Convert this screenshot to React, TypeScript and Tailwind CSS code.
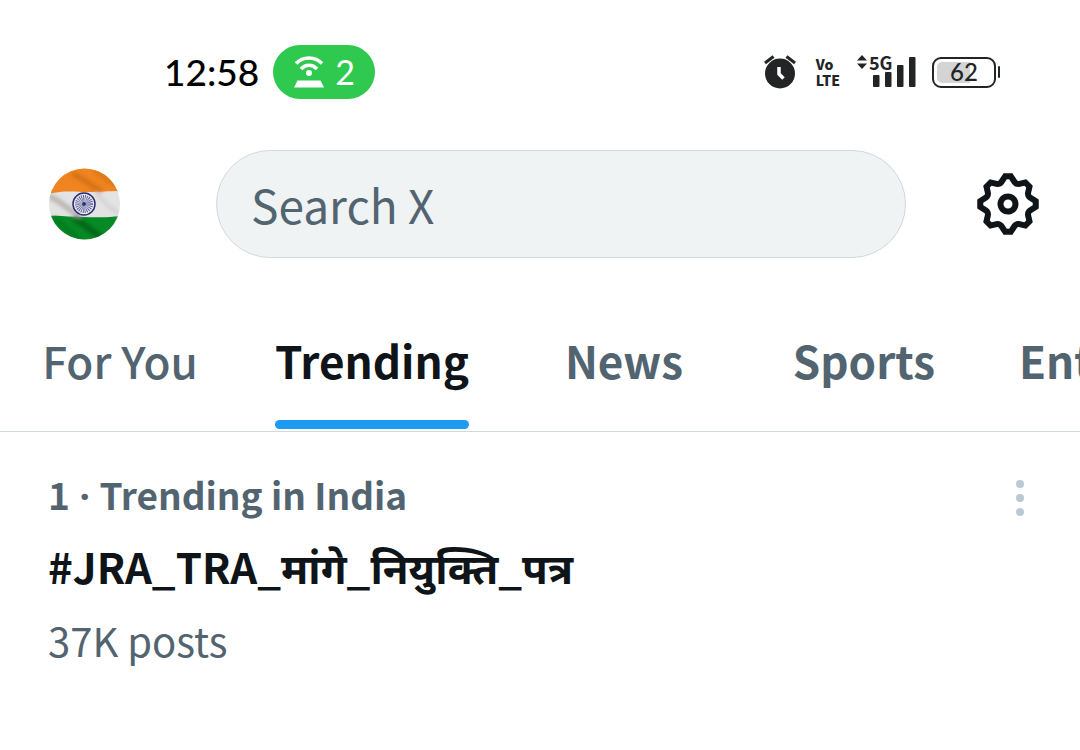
import { useState } from 'react';

const tabs = ['For You', 'Trending', 'News', 'Sports', 'Entertainment'];

const AlarmIcon = () => (
  <svg viewBox="0 0 32 34" className="h-[34px] w-8" fill="#222426" aria-hidden="true">
    <circle cx="16" cy="18.5" r="15" />
    <path d="M1 8l8.500-6.500M31 8l-8.500-6.500" stroke="#222426" strokeWidth="3" fill="none" />
    <path d="M15 12v7l4.5 4.5" stroke="#fff" strokeWidth="3.500" fill="none" />
  </svg>
);

const HotspotIcon = () => (
  <svg viewBox="0 0 32 32" className="size-8" fill="none" stroke="#fff" strokeWidth="3.500" aria-hidden="true">
    <path d="M3 7.5C10 0 22 0 29 7.5" />
    <path d="M8 13c4.500-5 11.500-5 16 0" />
    <circle cx="16" cy="17" r="3" fill="#fff" stroke="none" />
    <path d="M4.500 24.500h23l3.500 7H1z" fill="#fff" stroke="none" />
  </svg>
);

const SignalIcon = () => (
  <svg viewBox="0 0 44 32" className="h-8 w-11" fill="#222426" aria-hidden="true">
    <rect x="1" y="19" width="6.500" height="12" rx="1" />
    <rect x="13" y="16" width="6.500" height="15" rx="1" />
    <rect x="25" y="9" width="6.500" height="22" rx="1" />
    <rect x="37" y="1" width="6.500" height="30" rx="1" />
  </svg>
);

const GearIcon = () => (
  <svg viewBox="0 0 24 24" className="size-[72px]" fill="currentColor" aria-hidden="true">
    <path d="M10.54 1.75h2.92l1.57 2.36c.11.17.32.25.53.21l2.53-.59 2.17 2.17-.58 2.54c-.05.2.04.41.21.53l2.36 1.57v2.92l-2.36 1.57c-.17.12-.26.33-.21.53l.58 2.54-2.17 2.17-2.53-.59c-.21-.04-.42.04-.53.21l-1.57 2.36h-2.92l-1.58-2.36c-.11-.17-.32-.25-.52-.21l-2.54.59-2.17-2.17.58-2.54c.05-.2-.03-.41-.21-.53l-2.35-1.57v-2.92L4.1 8.97c.18-.12.26-.33.21-.53L3.73 5.9 5.9 3.73l2.54.59c.2.04.41-.04.52-.21l1.58-2.36zm1.07 2l-.98 1.47C10.05 6.08 9 6.5 7.99 6.27l-1.46-.34-.6.6.33 1.46c.24 1.01-.18 2.07-1.05 2.64l-1.46.98v.78l1.46.98c.87.57 1.29 1.63 1.05 2.64l-.33 1.46.6.6 1.46-.34c1.01-.23 2.06.19 2.64 1.05l.98 1.47h.78l.97-1.47c.58-.86 1.63-1.28 2.65-1.05l1.45.34.61-.6-.34-1.46c-.23-1.01.18-2.07 1.05-2.64l1.47-.98v-.78l-1.47-.98c-.87-.57-1.28-1.63-1.05-2.64l.34-1.46-.61-.6-1.45.34c-1.02.23-2.07-.19-2.65-1.05l-.97-1.47h-.78zM12 10.5c-.83 0-1.5.67-1.5 1.5s.67 1.5 1.5 1.5c.82 0 1.5-.67 1.5-1.5s-.68-1.5-1.5-1.5zM8.500 12c0-1.93 1.56-3.5 3.5-3.5 1.93 0 3.5 1.57 3.5 3.5s-1.57 3.5-3.5 3.5c-1.94 0-3.5-1.57-3.5-3.5z" />
  </svg>
);

const FlagAvatar = () => (
  <svg viewBox="0 0 72 72" className="size-[72px]" aria-hidden="true">
    <defs>
      <clipPath id="avatar-clip">
        <circle cx="36.500" cy="36" r="35.500" />
      </clipPath>
      <filter id="fold-blur" x="-20%" y="-20%" width="140%" height="140%">
        <feGaussianBlur stdDeviation="2" />
      </filter>
    </defs>
    <g clipPath="url(#avatar-clip)">
      <rect width="72" height="72" fill="#e4e3e3" />
      <path d="M0 0h72v23c-12 0-20 1-32 1S16 22 0 26z" fill="#f08420" />
      <path d="M0 48c12-1 22 1 34 1s24 1 38-1v24H0z" fill="#078a26" />
      {/* folds in the cloth */}
      <g filter="url(#fold-blur)" fill="none">
        <path d="M24 6c12 4 18 12 30 17" stroke="#cb6c13" strokeWidth="4" />
        <path d="M46 2c8 4 14 12 28 18" stroke="#d57618" strokeWidth="4" />
        <path d="M0 28c12 4 18 12 32 21" stroke="#b3aeab" strokeWidth="5" />
        <path d="M48 26c8 6 12 14 24 20" stroke="#cfcdcd" strokeWidth="3" />
        <path d="M26 50c10 6 16 12 28 20" stroke="#056318" strokeWidth="6" />
        <path d="M6 50c8 6 14 14 26 20" stroke="#06761d" strokeWidth="4" />
      </g>
      <circle cx="36" cy="36" r="11" fill="#e8e8ee" stroke="#2b2c74" strokeWidth="1.500" />
      <circle cx="36" cy="36" r="5.500" fill="none" stroke="#5a5b94" strokeWidth="7" strokeDasharray="0.700 0.740" />
      <circle cx="36" cy="36" r="2" fill="#2b2c74" />
    </g>
  </svg>
);

const StatusBar = () => (
  <div className="flex items-center justify-between pt-[45px] pr-20 pb-[51px] pl-[164px] font-[Lato,sans-serif]">
    <div className="flex items-center gap-3.5">
      <span className="text-[37px] leading-[54px] font-medium text-black">12:58</span>
      <div className="flex h-[54px] items-center gap-2.5 rounded-full bg-[#2fc94f] px-5 text-white">
        <HotspotIcon />
        <span className="text-[34px] leading-[54px]">2</span>
      </div>
    </div>
    <div className="flex items-center text-[#222426]">
      <AlarmIcon />
      <div className="ml-5 flex flex-col font-['Noto_Sans_CJK_SC',sans-serif] text-sm leading-4 font-black">
        <span>Vo</span>
        <span>LTE</span>
      </div>
      <div className="relative ml-8">
        <SignalIcon />
        <div className="absolute -top-0.5 -left-4 flex items-center gap-px">
          <svg viewBox="0 0 12 16" className="h-4 w-3" fill="#222426" aria-hidden="true">
            <path d="M6 1l5 5.500H1zM6 15l5-5.500H1z" />
          </svg>
          <span className="font-['Noto_Sans_CJK_SC',sans-serif] text-lg leading-4 font-bold">5G</span>
        </div>
      </div>
      <div className="ml-4 flex items-center gap-0.5">
        <div className="flex h-[31px] w-16 rounded-[9px] border-2 border-[#222426] p-[3px]">
          <div className="flex flex-1 items-center justify-center rounded-[5px] bg-linear-to-r from-[#d4d4d4] from-62% to-transparent to-62% text-2xl leading-6 font-medium">
            62
          </div>
        </div>
        <div className="h-3 w-0.5 rounded-full bg-[#222426]" />
      </div>
    </div>
  </div>
);

const App = () => {
  const [active, setActive] = useState('Trending');

  return (
    <main className="min-h-screen w-full overflow-hidden bg-white font-['Noto_Sans_CJK_SC','Noto_Sans_Devanagari','Noto_Sans',sans-serif] text-[#536471]">
      <StatusBar />

      <header className="flex items-center pr-9 pl-12">
        <button type="button" aria-label="Profile" className="shrink-0">
          <FlagAvatar />
        </button>
        <input
          type="search"
          aria-label="Search X"
          placeholder="Search X"
          className="mr-[66px] ml-24 h-[108px] min-w-0 flex-1 rounded-full border border-[#cfd9de] bg-[#eff3f4] px-[34px] text-[46px] outline-none placeholder:text-[#536471]"
        />
        <button type="button" aria-label="Settings" className="shrink-0 text-[#0f1419]">
          <GearIcon />
        </button>
      </header>

      <nav className="mt-12 flex overflow-hidden border-b border-[#cfd9de]">
        {tabs.map((tab) => (
          <button
            key={tab}
            type="button"
            onClick={() => setActive(tab)}
            className={`flex min-w-60 shrink-0 flex-col items-center px-[35px] pt-6 pb-0.5 text-[44px] leading-[60px] ${
              tab === 'For You' ? 'font-medium' : 'font-bold'
            } ${active === tab ? 'text-[#0f1419]' : ''}`}
          >
            <span>{tab}</span>
            <span className={`mt-[30px] h-[9px] w-full rounded-full ${active === tab ? 'bg-[#1d9bf0]' : ''}`} />
          </button>
        ))}
      </nav>

      <article className="flex items-start justify-between pt-8 pr-12 pl-12">
        <div>
          <p className="text-[37px] leading-[60px] font-bold">
            1<span className="font-['Noto_Sans',sans-serif]"> · </span>Trending in India
          </p>
          <h2 className="mt-1 text-[42px] leading-[72px] font-bold text-[#0f1419]">#JRA_TRA_मांगे_नियुक्ति_पत्र</h2>
          <p className="mt-2 text-[40px] leading-[60px]">37K posts</p>
        </div>
        <button type="button" aria-label="More" className="mt-4 flex w-6 flex-col items-center gap-1.5">
          <span className="size-2 rounded-full bg-[#b9cad3]" />
          <span className="size-2 rounded-full bg-[#b9cad3]" />
          <span className="size-2 rounded-full bg-[#b9cad3]" />
        </button>
      </article>
    </main>
  );
};

export default App;
